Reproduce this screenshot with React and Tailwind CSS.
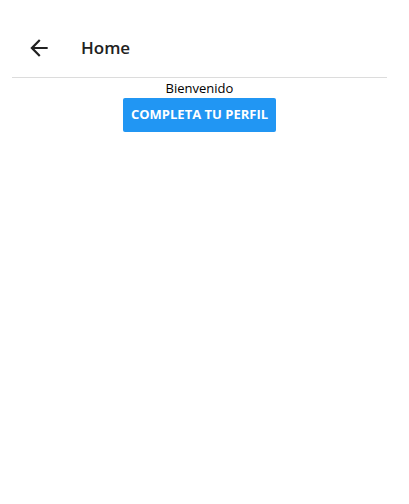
import { useState } from "react";

export default function App() {
  const [done, setDone] = useState(false);

  return (
    <div className="min-h-screen w-[399px] bg-white font-['Open_Sans','Segoe_UI',sans-serif] text-[#212121]">
      {/* Header */}
      <div className="px-[12px] pt-[18px]">
        <div className="flex items-center h-[60px] border-b border-[#dcdcdc]">
          <button className="ml-[14px] w-[26px] h-[26px] flex items-center justify-center text-[#212121]">
            <svg width="26" height="26" viewBox="0 0 24 24" fill="currentColor">
              <path d="M20 11H7.83l5.59-5.59L12 4l-8 8 8 8 1.41-1.41L7.83 13H20v-2z" />
            </svg>
          </button>
          <h1 className="ml-[29px] text-[17px] font-semibold leading-none">Home</h1>
        </div>
      </div>

      {/* Content */}
      <div className="flex flex-col items-center">
        <p className="text-[13px] leading-[20px] text-black">Bienvenido</p>
        <button
          onClick={() => setDone(!done)}
          className="h-[34px] px-[8px] rounded-[2px] bg-[#2196f3] text-white text-[13px] font-bold uppercase"
        >
          Completa tu perfil
        </button>
      </div>
    </div>
  );
}
